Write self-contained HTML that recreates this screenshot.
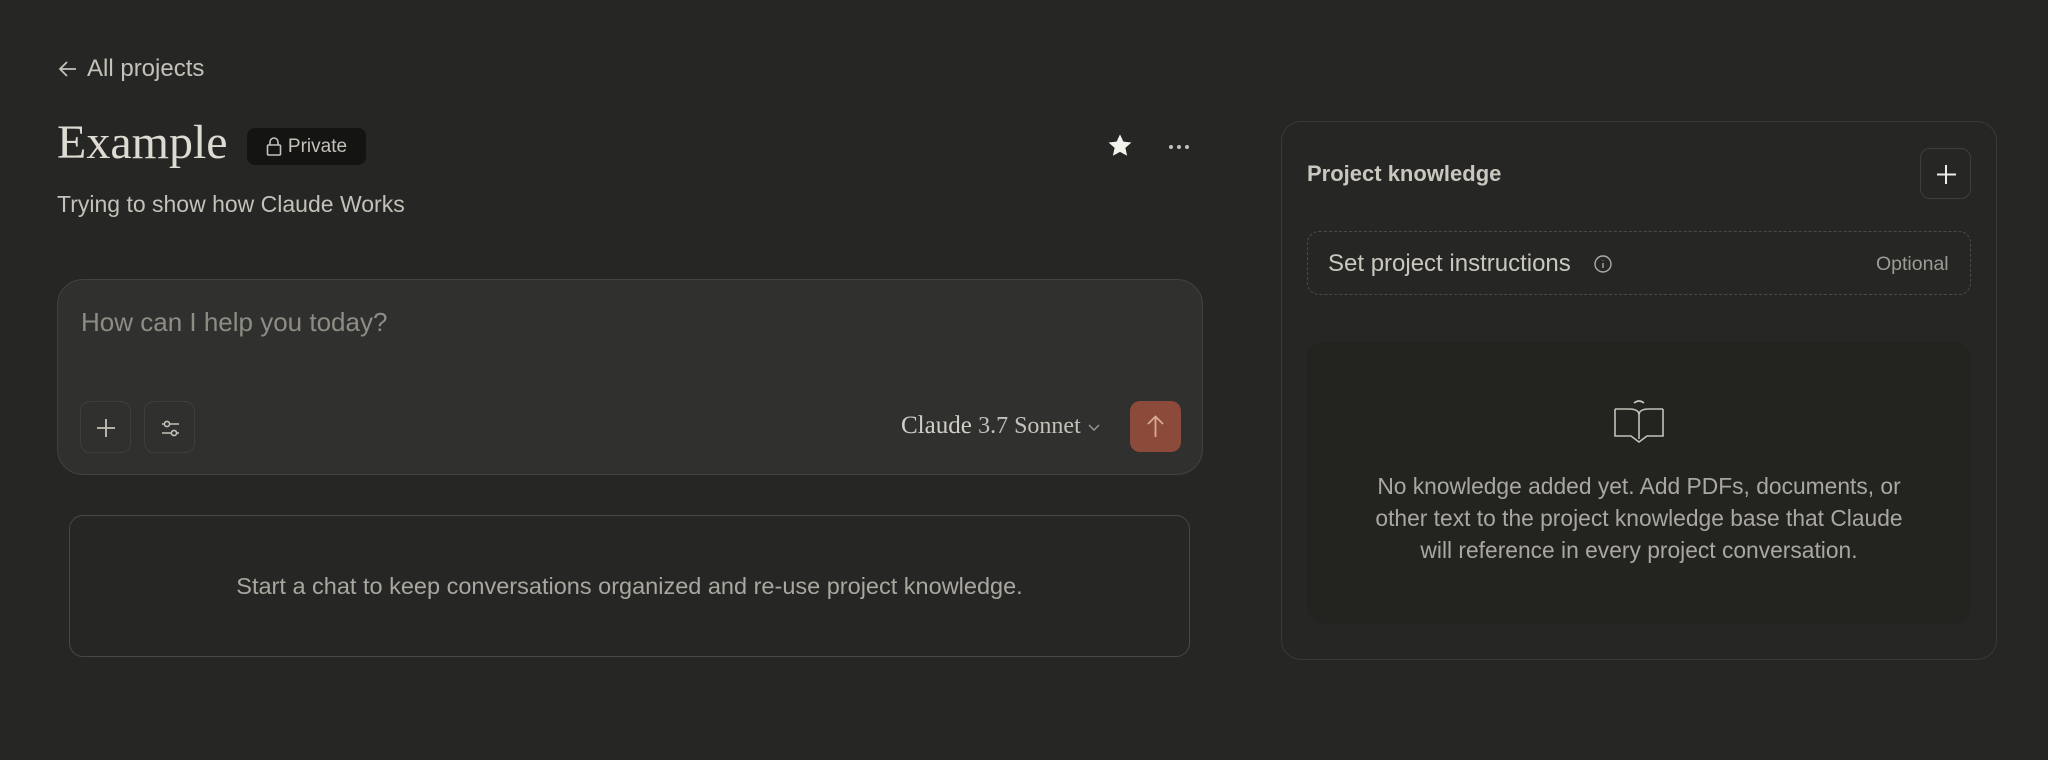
<!DOCTYPE html>
<html><head><meta charset="utf-8"><style>
*{box-sizing:border-box;margin:0;padding:0}
body{width:2048px;height:760px;background:#262624;font-family:"Liberation Sans",sans-serif;color:#c3c1b8;position:relative;overflow:hidden}
.a{position:absolute}
.btn{position:absolute;border:1px solid #3e3e3b;border-radius:10px}
</style></head><body>
<div class="a" style="left:57px;top:55px;font-size:24px;color:#c3c1b8;display:flex;align-items:center;gap:8px">
<svg width="22" height="22" viewBox="0 0 22 22" fill="none" stroke="#c3c1b8" stroke-width="1.8"><path d="M19 11H4M10 4L3 11l7 7"/></svg>All projects</div>
<div class="a" style="left:57px;top:115px;font-family:'Liberation Serif',serif;font-size:48px;color:#dedbd2">Example</div>
<div class="a" style="left:247px;top:128px;width:119px;height:37px;background:#141413;border-radius:8px;display:flex;align-items:center;justify-content:center;gap:6px;font-size:19px;color:#c3c1b8">
<svg width="16" height="20" viewBox="0 0 16 20" fill="none" stroke="#c3c1b8" stroke-width="1.6"><rect x="1.5" y="8" width="13" height="10" rx="1"/><path d="M4 8V5a4 4 0 0 1 8 0v3"/></svg>Private</div>
<svg class="a" style="left:1106px;top:132px" width="28" height="28" viewBox="0 0 24 24"><path fill="#f4f2ec" d="M12 2l2.9 6.3 6.9.7-5.2 4.6 1.5 6.8L12 17l-6.1 3.4 1.5-6.8L2.2 9l6.9-.7z"/></svg>
<svg class="a" style="left:1166px;top:140px" width="28" height="14"><circle cx="5" cy="7" r="2" fill="#c3c1b8"/><circle cx="13" cy="7" r="2" fill="#c3c1b8"/><circle cx="21" cy="7" r="2" fill="#c3c1b8"/></svg>
<div class="a" style="left:57px;top:191px;font-size:23px;color:#c3c1b8">Trying to show how Claude Works</div>

<div class="a" style="left:57px;top:279px;width:1146px;height:196px;background:#30302e;border:1px solid #42423f;border-radius:26px"></div>
<div class="a" style="left:81px;top:307px;font-size:26px;color:#8e8c84">How can I help you today?</div>
<div class="btn" style="left:80px;top:401px;width:51px;height:52px"><svg width="51" height="52"><path d="M25 17v18M16 26h18" stroke="#c3c1b8" stroke-width="1.8"/></svg></div>
<div class="btn" style="left:144px;top:401px;width:51px;height:52px"><svg width="51" height="52" fill="none" stroke="#c3c1b8" stroke-width="1.6"><path d="M17 22h17M17 31h17"/><circle cx="22" cy="22" r="2.6" fill="#30302e"/><circle cx="29" cy="31" r="2.6" fill="#30302e"/></svg></div>
<div class="a" style="left:901px;top:412px;font-family:'Liberation Serif',serif;font-size:25px;color:#d0cec5">Claude <span style="font-size:24px;color:#c3c1b8">3.7 Sonnet</span> <svg width="14" height="10" viewBox="0 0 14 10"><path d="M2 2l5 5 5-5" stroke="#999" fill="none" stroke-width="1.4"/></svg></div>
<div class="a" style="left:1130px;top:401px;width:51px;height:51px;background:#8b4a3a;border-radius:10px"><svg width="51" height="51"><path d="M25.5 36V16M18 23l7.5-7.5L33 23" stroke="#d8a898" stroke-width="1.8" fill="none"/></svg></div>

<div class="a" style="left:69px;top:515px;width:1121px;height:142px;border:1px solid #484845;border-radius:14px;display:flex;align-items:center;justify-content:center;font-size:23.5px;color:#a9a79f">Start a chat to keep conversations organized and re-use project knowledge.</div>

<div class="a" style="left:1281px;top:121px;width:716px;height:539px;border:1px solid #3a3a37;border-radius:20px"></div>
<div class="a" style="left:1307px;top:161px;font-size:22px;font-weight:bold;color:#c9c7be">Project knowledge</div>
<div class="btn" style="left:1920px;top:148px;width:51px;height:51px"><svg width="51" height="51"><path d="M25 16v19M16 25.5h19" stroke="#eeece6" stroke-width="2"/></svg></div>
<div class="a" style="left:1307px;top:231px;width:664px;height:64px;border:1.5px dashed #4a4a47;border-radius:12px"></div>
<div class="a" style="left:1328px;top:250px;font-size:24px;color:#c9c7be">Set project instructions</div>
<svg class="a" style="left:1593px;top:254px" width="20" height="20" fill="none" stroke="#aaa" stroke-width="1.4"><circle cx="10" cy="10" r="8"/><path d="M10 9v5M10 6v.5"/></svg>
<div class="a" style="left:1876px;top:253px;font-size:19.5px;color:#9d9b93">Optional</div>
<div class="a" style="left:1307px;top:342px;width:664px;height:282px;background:#232320;border-radius:16px"></div>
<svg class="a" style="left:1614px;top:396px" width="50" height="50" viewBox="0 0 50 50" fill="none" stroke="#c3c1b8" stroke-width="1.6"><path d="M20 7q5-4 10 0"/><path d="M1 13h14q10 0 10 6v24M49 13H35q-10 0-10 6"/><path d="M1 13v27h16l8 6 8-6h16V13"/></svg>
<div class="a" style="left:1307px;top:470px;width:664px;text-align:center;font-size:22.8px;line-height:32px;color:#a9a79f">No knowledge added yet. Add PDFs, documents, or<br>other text to the project knowledge base that Claude<br>will reference in every project conversation.</div>
</body></html>
